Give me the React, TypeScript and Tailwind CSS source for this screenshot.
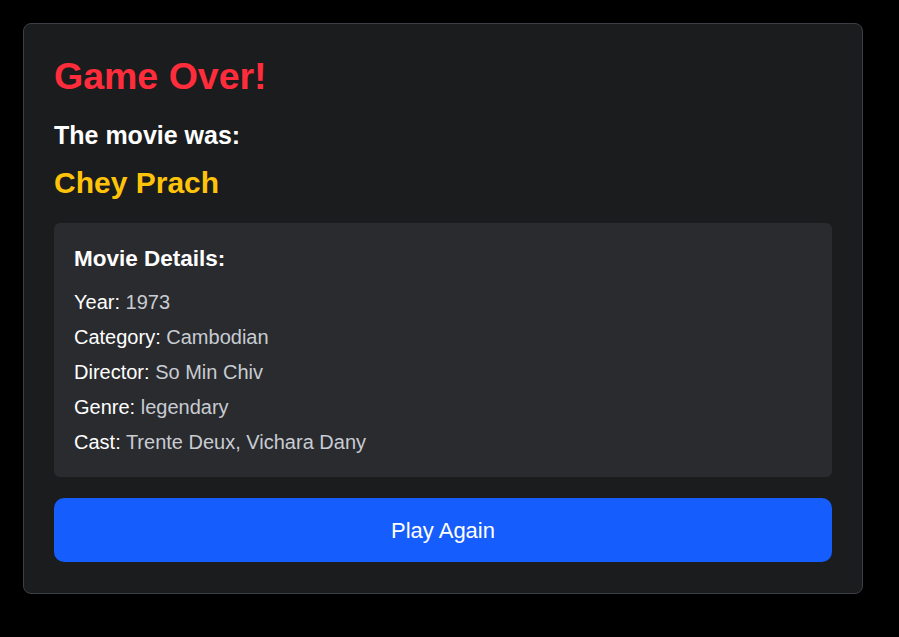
export default function App() {
  const rows: [string, string][] = [
    ["Year", "1973"],
    ["Category", "Cambodian"],
    ["Director", "So Min Chiv"],
    ["Genre", "legendary"],
    ["Cast", "Trente Deux, Vichara Dany"],
  ];
  return (
    <div
      className="min-h-[637px] w-full bg-black pl-[23px] pt-[23px]"
      style={{ fontFamily: '"Liberation Sans", Arial, sans-serif' }}
    >
      <div className="flex w-[840px] flex-col rounded-[8px] border border-[#3b3e45] bg-[#1b1c1e] px-[30px] pb-[31px] pt-[31px]">
        <h1 className="text-[37.5px] font-bold leading-[1.15] text-[#ff2d3b]">Game Over!</h1>
        <h2 className="mt-[23px] text-[25px] font-bold leading-[1.15] text-white">The movie was:</h2>
        <h3 className="mt-[16px] text-[30px] font-bold leading-[1.15] text-[#ffc409]">Chey Prach</h3>
        <div className="mt-[23px] rounded-[6px] bg-[#2a2b2e] px-[20px] pb-[23px] pt-[23px]">
          <h4 className="text-[22.5px] font-bold leading-[1.15] text-white">Movie Details:</h4>
          <div className="mt-[19px] flex flex-col gap-[12px]">
            {rows.map(([k, v]) => (
              <p key={k} className="text-[20px] leading-[1.15] text-white">
                {k}: <span className="text-[#c8ccd3]">{v}</span>
              </p>
            ))}
          </div>
        </div>
        <button className="mt-[21px] flex h-[64px] w-full items-center justify-center rounded-[10px] bg-[#155dfc] text-[22px] text-white">
          Play Again
        </button>
      </div>
    </div>
  );
}
